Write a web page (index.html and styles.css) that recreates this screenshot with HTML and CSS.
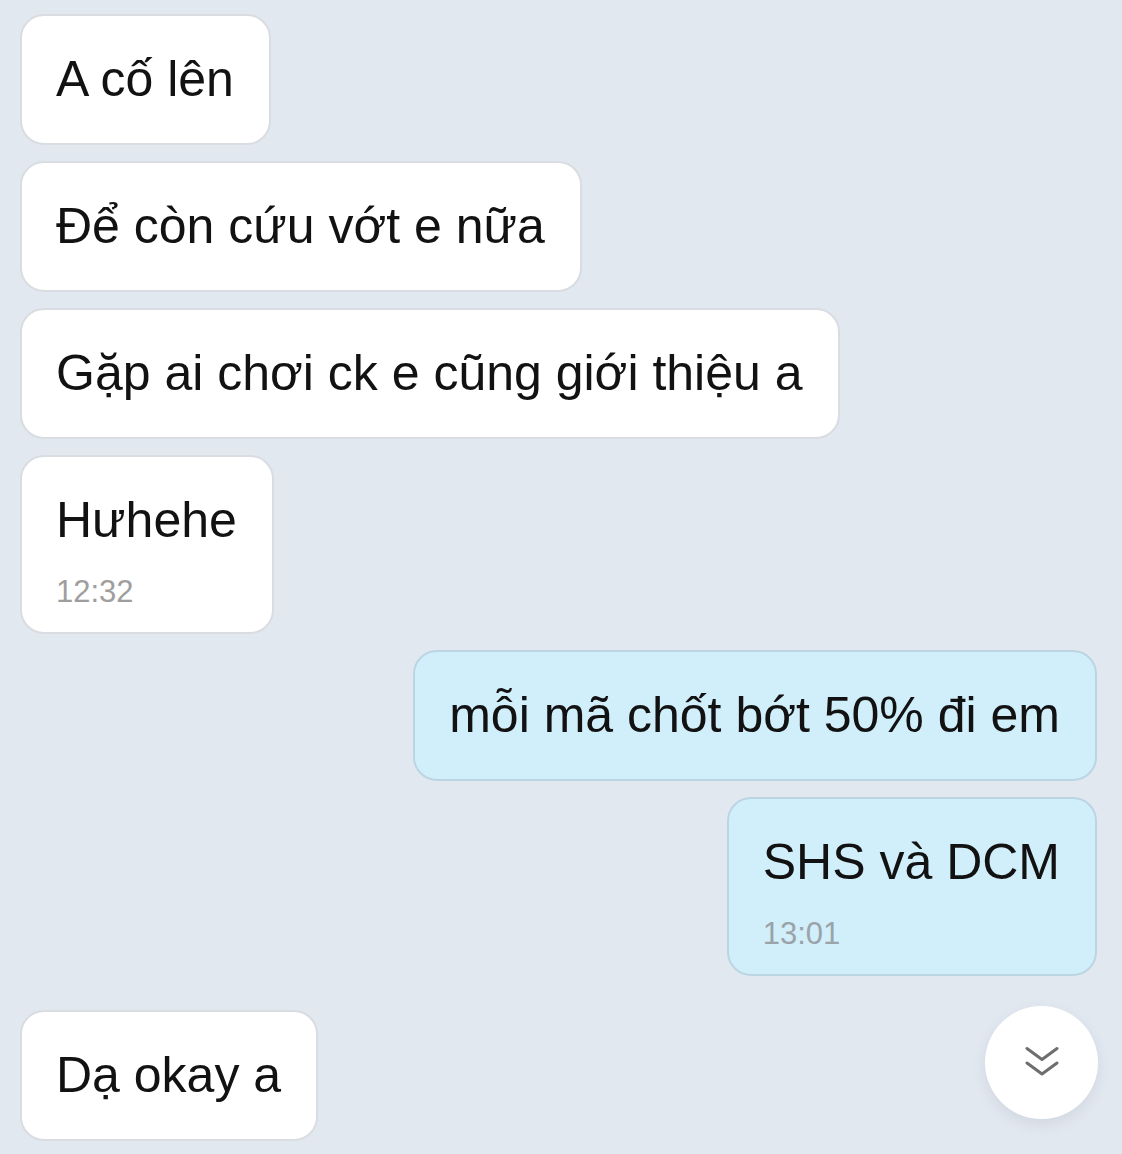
FILE: index.html
```html
<!DOCTYPE html>
<html lang="vi">
<head>
<meta charset="utf-8">
<title>Chat</title>
<link rel="stylesheet" href="styles.css">
</head>
<body>
<main class="chat">
  <div class="msg in">A cố lên</div>
  <div class="msg in">Để còn cứu vớt e nữa</div>
  <div class="msg in">Gặp ai chơi ck e cũng giới thiệu a</div>
  <div class="msg in timed">Hưhehe<span class="time">12:32</span></div>
  <div class="msg out">mỗi mã chốt bớt 50% đi em</div>
  <div class="msg out timed">SHS và DCM<span class="time">13:01</span></div>
  <div class="msg in new-group">Dạ okay a</div>
</main>
<button class="scroll-down" aria-label="Cuộn xuống">
  <svg width="34" height="34" viewBox="0 0 34 34" fill="none" stroke="#6e6e6e" stroke-width="3" stroke-linecap="round" stroke-linejoin="round">
    <path d="M2 2.5 L17 13.5 L32 2.5"/>
    <path d="M2 17 L17 28 L32 17"/>
  </svg>
</button>
</body>
</html>
```

FILE: styles.css
```css
html, body {
  margin: 0;
  padding: 0;
}
body {
  background: #e2e8f0;
  width: 1122px;
  height: 1154px;
  overflow: hidden;
  position: relative;
  font-family: "Liberation Sans", Arial, sans-serif;
}
.chat {
  display: flex;
  flex-direction: column;
  gap: 16px;
  padding: 14px 25px 0 20px;
}
.msg {
  box-sizing: border-box;
  font-size: 50px;
  line-height: 61px;
  color: #121212;
  padding: 33px 35px 33px 34px;
  border-radius: 24px;
  border: 2px solid #d9dce1;
  background: #ffffff;
  display: flex;
  flex-direction: column;
  white-space: nowrap;
}
.msg.in {
  align-self: flex-start;
}
.msg.out {
  align-self: flex-end;
  background: #d1eefb;
  border-color: #bcd5e2;
}
.msg.timed {
  padding-bottom: 20px;
}
.time {
  font-size: 31px;
  line-height: 40px;
  margin-top: 21px;
  color: #9e9e9e;
}
.msg.out .time {
  color: #9aa3a8;
}
.msg.new-group {
  margin-top: 18px;
}
.scroll-down {
  position: absolute;
  left: 985px;
  top: 1006px;
  width: 113px;
  height: 113px;
  border-radius: 50%;
  border: none;
  background: #ffffff;
  box-shadow: 0 5px 14px rgba(60, 70, 90, 0.10);
  display: flex;
  align-items: center;
  justify-content: center;
  padding: 0;
}
.scroll-down svg {
  display: block;
  margin-top: 0;
}
```
